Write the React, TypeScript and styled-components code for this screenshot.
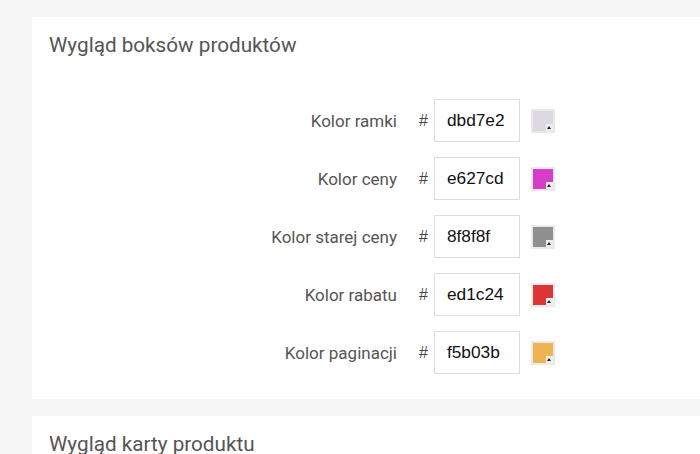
import React from "react";
import styled, { createGlobalStyle } from "styled-components";

const Global = createGlobalStyle`
  html, body { margin: 0; padding: 0; background: #f7f7f7; overflow: hidden; }
  body { font-family: Roboto, "Noto Sans", sans-serif; }
`;

const Page = styled.div`
  padding: 17px 0 0 32px;
  width: 760px;
  display: flex;
  flex-direction: column;
  gap: 17px;
`;

const Card = styled.section`
  background: #fff;
  padding: 15px 17px 25px 17px;
`;

const Title = styled.h2`
  margin: 0;
  font-size: 20.7px;
  font-weight: 400;
  color: #555;
  line-height: 26px;
`;

const Form = styled.div`
  display: grid;
  grid-template-columns: 370px auto auto auto;
  justify-content: start;
  align-items: center;
  row-gap: 15px;
  margin-top: 41px;
`;

const Label = styled.label`
  font-size: 17px;
  color: #555;
  text-align: right;
  padding-right: 22px;
`;

const Hash = styled.span`
  font-family: "Liberation Sans", Arial, sans-serif;
  font-size: 16px;
  color: #444;
  margin-right: 6px;
`;

const Input = styled.div`
  box-sizing: border-box;
  width: 86px;
  height: 43px;
  border: 1px solid #ddd;
  padding: 0 12px;
  display: flex;
  align-items: center;
  font-family: "Liberation Sans", Arial, sans-serif;
  font-size: 17.3px;
  color: #111;
  background: #fff;
`;

const Swatch = styled.div<{ $c: string }>`
  position: relative;
  box-sizing: border-box;
  width: 24px;
  height: 24px;
  margin-left: 11px;
  background: #e9e9e9;
  padding: 2px;
  &::before {
    content: "";
    display: block;
    width: 100%;
    height: 100%;
    background: ${(p) => p.$c};
  }
`;

const Corner = styled.span`
  position: absolute;
  right: 2px;
  bottom: 2px;
  width: 7px;
  height: 7px;
  background: #eeeeee;
  display: flex;
  align-items: center;
  justify-content: center;
  &::after {
    content: "";
    width: 0;
    height: 0;
    border-left: 2px solid transparent;
    border-right: 2px solid transparent;
    border-bottom: 3px solid #222;
  }
`;

const rows: [string, string, string][] = [
  ["Kolor ramki", "dbd7e2", "#dcd9e3"],
  ["Kolor ceny", "e627cd", "#d63dc8"],
  ["Kolor starej ceny", "8f8f8f", "#8f8f8f"],
  ["Kolor rabatu", "ed1c24", "#dc3535"],
  ["Kolor paginacji", "f5b03b", "#eeb452"],
];

export default function App() {
  return (
    <>
      <Global />
      <Page>
        <Card>
          <Title>Wygląd boksów produktów</Title>
          <Form>
            {rows.map(([l, v, shown]) => (
              <React.Fragment key={l}>
                <Label>{l}</Label>
                <Hash>#</Hash>
                <Input>{v}</Input>
                <Swatch $c={shown}>
                  <Corner />
                </Swatch>
              </React.Fragment>
            ))}
          </Form>
        </Card>
        <Card>
          <Title>Wygląd karty produktu</Title>
        </Card>
      </Page>
    </>
  );
}
